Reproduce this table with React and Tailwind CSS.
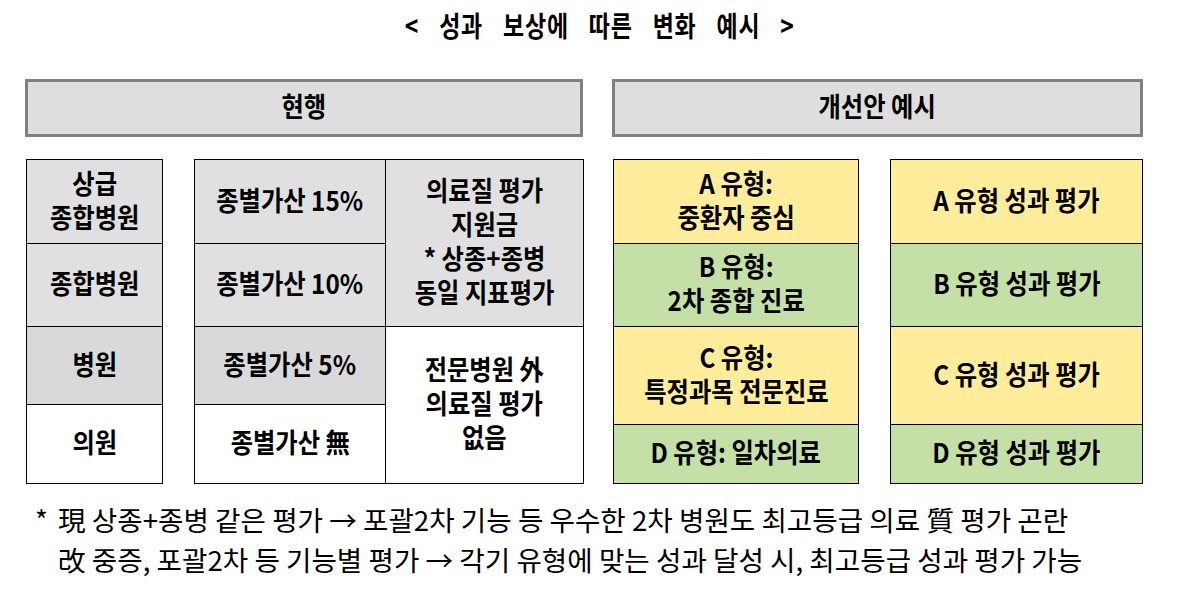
const font = "font-['Noto_Sans_CJK_KR','Noto_Sans',sans-serif]";

const Cell = ({ className = "", lines }) => (
  <div className={`flex items-center justify-center pb-[4px] text-center font-bold text-[27px] leading-[34px] ${className}`}>
    <div className="scale-x-[0.9] whitespace-nowrap">
      {lines.map((line) => (
        <div key={line} className="h-[34px]">{line}</div>
      ))}
    </div>
  </div>
);

const Header = ({ className = "", children }) => (
  <div className={`h-[58px] border-[3px] border-[#808080] bg-[#dedede] flex items-center justify-center pb-[3px] font-bold text-[27px] ${className}`}>
    <span className="block scale-x-[0.9]">{children}</span>
  </div>
);

const yellow = "bg-[#ffed9b]";
const green = "bg-[#c5e0a6]";

export default function App() {
  return (
    <div className={`w-[1182px] h-[597px] bg-white text-black overflow-hidden ${font}`}>
      <div className="pt-[8px] pl-[18px] flex justify-center">
        <div className="scale-x-[0.82] whitespace-nowrap font-bold text-[28px] leading-[34px] tracking-[1px] [word-spacing:17px]">
          &lt; 성과 보상에 따른 변화 예시 &gt;
        </div>
      </div>

      <div className="mt-[37px] ml-[25px] flex gap-[29px]">
        <Header className="w-[558px]">현행</Header>
        <Header className="w-[531px]">개선안 예시</Header>
      </div>

      <div className="mt-[22px] ml-[26px] flex">
        {/* 기관 종별 */}
        <div className="w-[137px] border border-black flex flex-col">
          <Cell className="h-[83px] bg-[#e0e0e0]" lines={["상급", "종합병원"]} />
          <Cell className="h-[83px] border-t border-black bg-[#e0e0e0]" lines={["종합병원"]} />
          <Cell className="h-[78px] border-t border-black bg-[#d9d9d9]" lines={["병원"]} />
          <Cell className="h-[79px] border-t border-black bg-white" lines={["의원"]} />
        </div>

        {/* 현행 평가 */}
        <div className="ml-[31px] w-[390px] border border-black grid grid-cols-[190px_1fr] grid-rows-[83px_83px_78px_79px]">
          <Cell className="bg-[#e0e0e0]" lines={["종별가산 15%"]} />
          <Cell
            className="row-span-2 border-l border-black bg-[#e0e0e0]"
            lines={["의료질 평가", "지원금", "* 상종+종병", "동일 지표평가"]}
          />
          <Cell className="border-t border-black bg-[#e0e0e0]" lines={["종별가산 10%"]} />
          <Cell className="border-t border-black bg-[#d9d9d9]" lines={["종별가산 5%"]} />
          <Cell
            className="row-span-2 border-l border-t border-black bg-white"
            lines={["전문병원 外", "의료질 평가", "없음"]}
          />
          <Cell className="border-t border-black bg-white" lines={["종별가산 無"]} />
        </div>

        {/* 개선안 유형 */}
        <div className="ml-[29px] w-[246px] border border-black flex flex-col">
          <Cell className={`h-[83px] ${yellow}`} lines={["A 유형:", "중환자 중심"]} />
          <Cell className={`h-[83px] border-t border-black ${green}`} lines={["B 유형:", "2차 종합 진료"]} />
          <Cell className={`h-[98px] border-t border-black ${yellow}`} lines={["C 유형:", "특정과목 전문진료"]} />
          <Cell className={`h-[59px] border-t border-black ${green}`} lines={["D 유형: 일차의료"]} />
        </div>

        {/* 개선안 평가 */}
        <div className="ml-[31px] w-[253px] border border-black flex flex-col">
          <Cell className={`h-[83px] ${yellow}`} lines={["A 유형 성과 평가"]} />
          <Cell className={`h-[83px] border-t border-black ${green}`} lines={["B 유형 성과 평가"]} />
          <Cell className={`h-[98px] border-t border-black ${yellow}`} lines={["C 유형 성과 평가"]} />
          <Cell className={`h-[59px] border-t border-black ${green}`} lines={["D 유형 성과 평가"]} />
        </div>
      </div>

      <div className="mt-[15px] ml-[35px] text-[27.65px] leading-[40px] whitespace-nowrap">
        <div className="flex">
          <span className="w-[23px]">*</span>
          <span>現 상종+종병 같은 평가 → 포괄2차 기능 등 우수한 2차 병원도 최고등급 의료 質 평가 곤란</span>
        </div>
        <div className="pl-[23px]">
          改 중증, 포괄2차 등 기능별 평가 → 각기 유형에 맞는 성과 달성 시, 최고등급 성과 평가 가능
        </div>
      </div>
    </div>
  );
}
